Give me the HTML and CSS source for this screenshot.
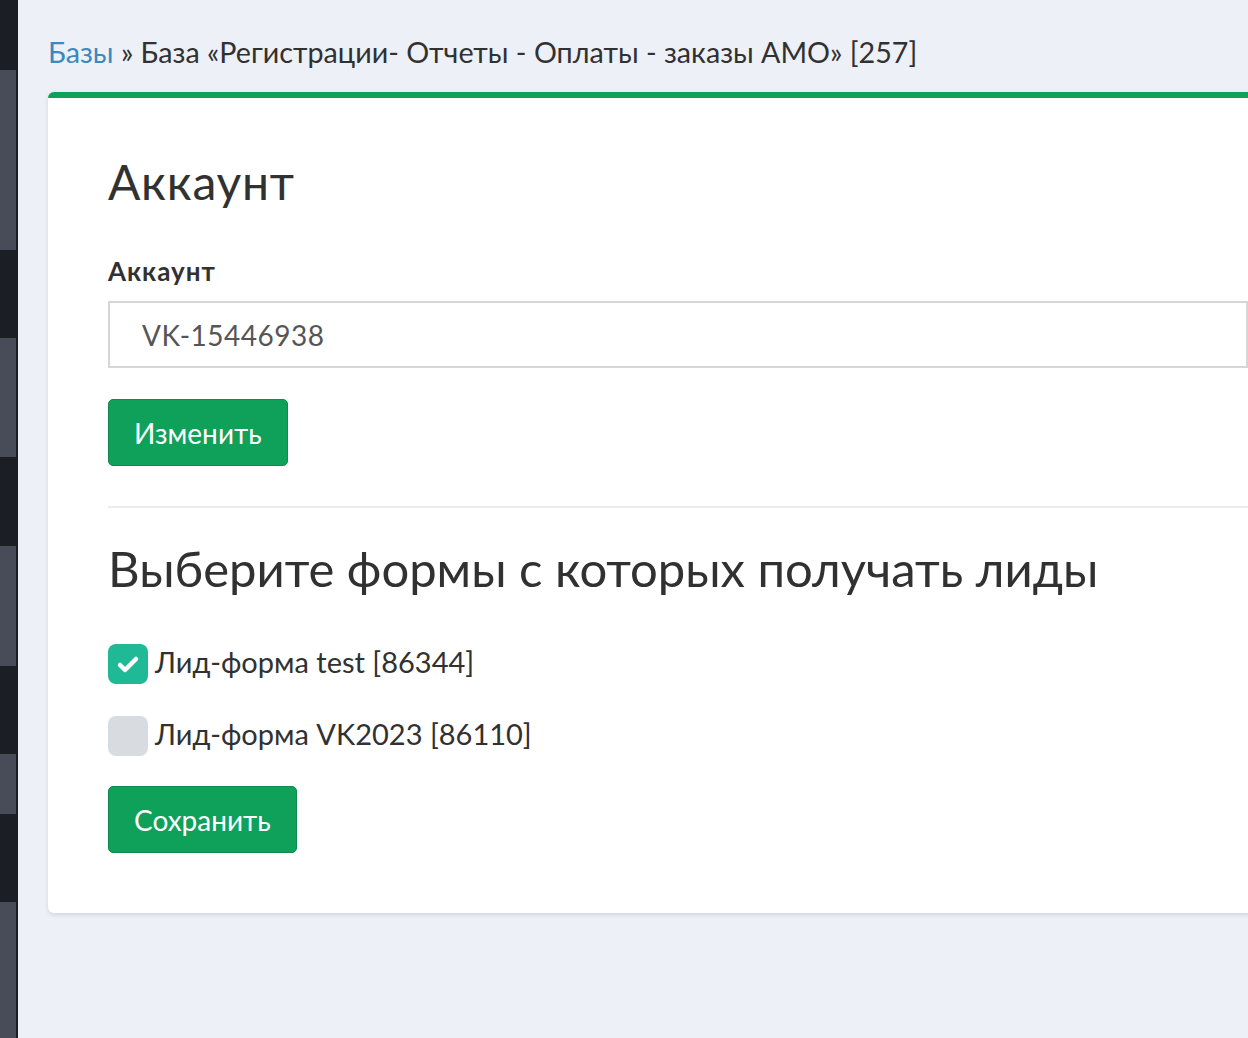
FILE: index.html
```html
<!DOCTYPE html>
<html>

<head>
    <title>Аккаунт</title>
    <meta charset="utf-8">
    <meta name="viewport" content="width=device-width, initial-scale=1.0">

    <link rel="stylesheet" href="styles.css">
</head>

<body>

    <aside class="sidebar">
        <div class="punkt dark" style="height:70px"></div>
        <div class="punkt light" style="height:180px"></div>
        <div class="punkt dark" style="height:88px"></div>
        <div class="punkt light" style="height:119px"></div>
        <div class="punkt dark" style="height:89px"></div>
        <div class="punkt light" style="height:120px"></div>
        <div class="punkt dark" style="height:88px"></div>
        <div class="punkt light" style="height:60px"></div>
        <div class="punkt dark" style="height:88px"></div>
        <div class="punkt light" style="height:136px"></div>
    </aside>

    <main class="indhold">
        <div class="breadcrumb">
            <a href="#">Базы</a> » База «Регистрации- Отчеты - Оплаты - заказы АМО» [257]
        </div>

        <section class="kort">
            <h3>Аккаунт</h3>

            <form class="konto">
                <label class="feltnavn" for="konto">Аккаунт</label>
                <input id="konto" class="felt" type="text" value="VK-15446938">
                <button type="button" class="knap">Изменить</button>
            </form>

            <hr>

            <h2>Выберите формы с которых получать лиды</h2>

            <form class="former">
                <label class="valg">
                    <input type="checkbox" checked>
                    <span class="boks"></span>
                    <span class="tekst">Лид-форма test [86344]</span>
                </label>
                <label class="valg">
                    <input type="checkbox">
                    <span class="boks"></span>
                    <span class="tekst">Лид-форма VK2023 [86110]</span>
                </label>
                <button type="button" class="knap">Сохранить</button>
            </form>
        </section>
    </main>

</body>

</html>
```

FILE: styles.css
```css
html,
body {
    margin: 0;
    height: 100%;
}

body {
    display: flex;
    overflow: hidden;
    background-color: #edf0f7;
    font-family: Lato, "Noto Sans", sans-serif;
    color: #313131;
}

.sidebar {
    width: 18px;
    flex-shrink: 0;
    background-color: #1b1e25;
}

.punkt {
    width: 16px;
}

.punkt.light {
    background-color: #474c58;
}

.indhold {
    flex: 1;
    padding-left: 30px;
}

.breadcrumb {
    margin-top: 33px;
    font-size: 28.7px;
    line-height: 38px;
}

.breadcrumb a {
    color: #3a89c0;
    text-decoration: none;
}

.kort {
    margin-top: 21px;
    margin-right: -60px;
    background-color: #fff;
    border-top: 6px solid #0fa05a;
    border-radius: 6px 0 0 6px;
    box-shadow: 0 2px 4px rgba(60, 70, 90, 0.15);
    padding: 55px 60px 60px 60px;
}

h3 {
    margin: 0;
    font-size: 48px;
    font-weight: 400;
    letter-spacing: 0.8px;
    line-height: 58px;
}

.konto {
    margin-top: 42px;
}

.feltnavn {
    display: block;
    font-size: 26px;
    font-weight: 700;
    letter-spacing: 1px;
    line-height: 36px;
}

.felt {
    display: block;
    box-sizing: border-box;
    width: 100%;
    height: 67px;
    margin-top: 12px;
    padding: 0 32px;
    border: 2px solid #d6d6d6;
    font-family: inherit;
    font-size: 28px;
    letter-spacing: 0.5px;
    color: #555;
}

.knap {
    display: block;
    height: 67px;
    margin-top: 31px;
    padding: 0 25px;
    background-color: #0fa05a;
    border: 1px solid #0b8b4d;
    border-radius: 5px;
    color: #fff;
    font-family: inherit;
    font-size: 28px;
}

hr {
    margin: 40px 0 0 0;
    border: 0;
    border-top: 2px solid #ececec;
}

h2 {
    margin: 30px 0 0 0;
    font-size: 49px;
    font-weight: 400;
    line-height: 60px;
}

.former {
    margin-top: 46px;
}

.valg {
    display: flex;
    align-items: center;
    gap: 7px;
    height: 40px;
    margin-bottom: 30px;
    font-size: 29px;
}

.valg + .valg {
    margin-top: 32px;
}

.valg input {
    display: none;
}

.tekst {
    padding-bottom: 5px;
}

.boks {
    width: 40px;
    height: 40px;
    border-radius: 8px;
    background-color: #d8dbe0;
}

.valg input:checked + .boks {
    background-color: #1fb995;
    background-image: url("data:image/svg+xml,%3Csvg xmlns='http://www.w3.org/2000/svg' viewBox='0 0 40 40'%3E%3Cpath d='M12 21l5 5 11-11' fill='none' stroke='white' stroke-width='4.5' stroke-linecap='round' stroke-linejoin='round'/%3E%3C/svg%3E");
}

.former .knap {
    margin-top: 0;
}
```
